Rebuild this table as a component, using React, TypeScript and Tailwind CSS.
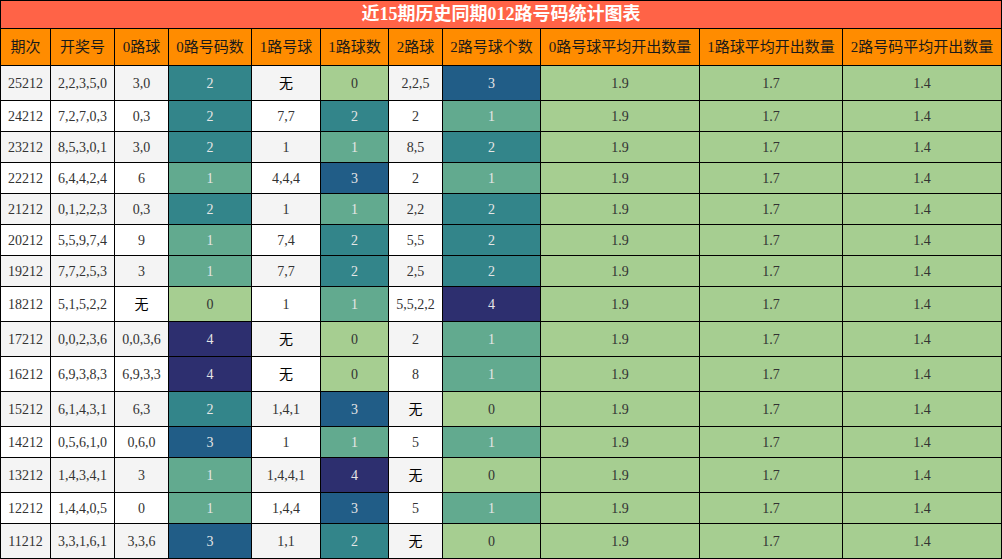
const headers = [
  "期次",
  "开奖号",
  "0路球",
  "0路号码数",
  "1路号球",
  "1路球数",
  "2路球",
  "2路号球个数",
  "0路号球平均开出数量",
  "1路球平均开出数量",
  "2路号码平均开出数量",
];

type Row = [string, string, string, number, string, number, string, number];

const rows: Row[] = [
  ["25212", "2,2,3,5,0", "3,0", 2, "无", 0, "2,2,5", 3],
  ["24212", "7,2,7,0,3", "0,3", 2, "7,7", 2, "2", 1],
  ["23212", "8,5,3,0,1", "3,0", 2, "1", 1, "8,5", 2],
  ["22212", "6,4,4,2,4", "6", 1, "4,4,4", 3, "2", 1],
  ["21212", "0,1,2,2,3", "0,3", 2, "1", 1, "2,2", 2],
  ["20212", "5,5,9,7,4", "9", 1, "7,4", 2, "5,5", 2],
  ["19212", "7,7,2,5,3", "3", 1, "7,7", 2, "2,5", 2],
  ["18212", "5,1,5,2,2", "无", 0, "1", 1, "5,5,2,2", 4],
  ["17212", "0,0,2,3,6", "0,0,3,6", 4, "无", 0, "2", 1],
  ["16212", "6,9,3,8,3", "6,9,3,3", 4, "无", 0, "8", 1],
  ["15212", "6,1,4,3,1", "6,3", 2, "1,4,1", 3, "无", 0],
  ["14212", "0,5,6,1,0", "0,6,0", 3, "1", 1, "5", 1],
  ["13212", "1,4,3,4,1", "3", 1, "1,4,4,1", 4, "无", 0],
  ["12212", "1,4,4,0,5", "0", 1, "1,4,4", 3, "5", 1],
  ["11212", "3,3,1,6,1", "3,3,6", 3, "1,1", 2, "无", 0],
];

// colour scale for counts 0..4
const countClass = [
  "bg-[#a6ce91] text-[#333]",
  "bg-[#62aa8f] text-[#e6e6e6]",
  "bg-[#33858a] text-[#e6e6e6]",
  "bg-[#215d87] text-[#e6e6e6]",
  "bg-[#2d2f6f] text-[#e6e6e6]",
];

const cell =
  "flex items-center justify-center border-r border-b border-black text-[14px]";

function Text({ v }: { v: string }) {
  return <span className={v === "无" ? "text-black" : ""}>{v}</span>;
}

export default function App() {
  return (
    <div
      className="w-[1002px] bg-white"
      style={{ fontFamily: '"Liberation Serif", "Noto Sans CJK SC", serif' }}
    >
      <div className="grid grid-cols-[50px_64px_54px_83px_69px_68px_54px_98px_159px_143px_159px] border-l border-t border-black text-[#333]">
        <div className="col-span-11 flex h-[28px] items-center justify-center border-r border-b border-black bg-[#ff6347] text-[18px] font-bold text-white">
          近15期历史同期012路号码统计图表
        </div>

        {headers.map((h) => (
          <div
            key={h}
            className="flex h-[37px] items-center justify-center border-r border-b border-black bg-[#ff8c00] text-[15px] text-[#1a1a1a]"
          >
            {h}
          </div>
        ))}

        {rows.map((r, i) => {
          const tall = r.includes("无");
          const h = tall ? "h-[35px]" : "h-[31px]";
          const plain = i % 2 === 0 ? "bg-[#f4f4f4]" : "bg-white";
          return [
            <div key={`${i}-a`} className={`${cell} ${h} ${plain}`}>{r[0]}</div>,
            <div key={`${i}-b`} className={`${cell} ${h} ${plain}`}>{r[1]}</div>,
            <div key={`${i}-c`} className={`${cell} ${h} ${plain}`}><Text v={r[2]} /></div>,
            <div key={`${i}-d`} className={`${cell} ${h} ${countClass[r[3]]}`}>{r[3]}</div>,
            <div key={`${i}-e`} className={`${cell} ${h} ${plain}`}><Text v={r[4]} /></div>,
            <div key={`${i}-f`} className={`${cell} ${h} ${countClass[r[5]]}`}>{r[5]}</div>,
            <div key={`${i}-g`} className={`${cell} ${h} ${plain}`}><Text v={r[6]} /></div>,
            <div key={`${i}-h`} className={`${cell} ${h} ${countClass[r[7]]}`}>{r[7]}</div>,
            <div key={`${i}-i`} className={`${cell} ${h} bg-[#a6ce91]`}>1.9</div>,
            <div key={`${i}-j`} className={`${cell} ${h} bg-[#a6ce91]`}>1.7</div>,
            <div key={`${i}-k`} className={`${cell} ${h} bg-[#a6ce91]`}>1.4</div>,
          ];
        })}
      </div>
    </div>
  );
}
